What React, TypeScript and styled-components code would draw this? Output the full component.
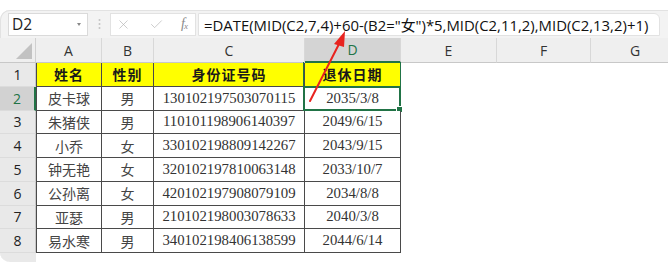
import React from 'react'
import styled, { createGlobalStyle, css } from 'styled-components'
import { X, Check } from 'lucide-react'

const GlobalStyle = createGlobalStyle`
	html, body {
		margin: 0;
		padding: 0;
		background: #ffffff;
	}
	body {
		font-family: 'Noto Sans', 'Noto Sans CJK SC', sans-serif;
	}
`

const Page = styled.div`
	position: relative;
	width: 668px;
	height: 266px;
	overflow: hidden;
	padding-top: 10px;
	box-sizing: border-box;
`

const Card = styled.div`
	background: #f3f3f3;
	border-radius: 10px 10px 0 10px;
	box-shadow: inset 0 1px 0 #e2e2e2, inset 1px 0 0 #e2e2e2;
	overflow: hidden;
	width: 680px;
`

const Toolbar = styled.div`
	display: flex;
	align-items: center;
	height: 28px;
	padding-left: 8px;
	box-sizing: border-box;
`

const NameBox = styled.div`
	display: flex;
	align-items: center;
	width: 80px;
	height: 23px;
	box-sizing: border-box;
	background: #ffffff;
	border: 1px solid #dadada;
	padding-left: 3px;
	font-family: 'Open Sans', sans-serif;
	font-size: 15.5px;
	color: #222;
`

const Caret = styled.span`
	margin-left: auto;
	margin-right: 6px;
	width: 0;
	height: 0;
	border-left: 2.5px solid transparent;
	border-right: 2.5px solid transparent;
	border-top: 3px solid #888;
`

const Grip = styled.div`
	width: 22px;
	display: flex;
	justify-content: center;
`

const IconBox = styled.div`
	display: flex;
	align-items: center;
	justify-content: space-between;
	width: 86px;
	height: 23px;
	box-sizing: border-box;
	background: #ffffff;
	border: 1px solid #e2e2e2;
	padding: 0 8px 0 5px;
	color: #b4b4b4;
`

const Fx = styled.span`
	font-family: 'Liberation Serif', serif;
	font-style: italic;
	font-size: 14px;
	color: #8a8a8a;
	letter-spacing: -1px;
	& sub {
		font-size: 9px;
		vertical-align: -1px;
	}
`

const Formula = styled.div`
	display: flex;
	align-items: center;
	height: 23px;
	width: 462px;
	box-sizing: border-box;
	margin-left: 2px;
	background: #ffffff;
	border: 1px solid #e2e2e2;
	border-radius: 0 6px 0 0;
	padding-left: 5px;
	font-family: 'Open Sans', 'Noto Sans CJK SC', sans-serif;
	font-size: 14.9px;
	color: #111;
	white-space: nowrap;
	overflow: hidden;
`

const Sheet = styled.div`
	display: grid;
	grid-template-columns: 36px 66px 52px 151px 96px 96px 94px 89px;
	grid-template-rows: 25px repeat(8, 23.75px) 9px;
	background: #ffffff;
`

const ColHead = styled.div<{ $active?: boolean }>`
	display: flex;
	align-items: center;
	justify-content: center;
	background: #efefef;
	border-right: 1px solid #d8d8d8;
	border-bottom: 1px solid #c8c8c8;
	font-family: 'Open Sans', sans-serif;
	font-size: 14px;
	color: #333;
	${({ $active }) =>
		$active &&
		css`
			background: #d4d4d4;
			color: #217346;
			border-bottom: 2px solid #217346;
		`}
`

const Corner = styled.div`
	position: relative;
	background: #efefef;
	border-right: 1px solid #d0d0d0;
	border-bottom: 1px solid #c8c8c8;
	&::after {
		content: '';
		position: absolute;
		right: 3px;
		bottom: 3px;
		border-left: 16px solid transparent;
		border-bottom: 16px solid #c2c2c2;
	}
`

const RowHead = styled.div<{ $active?: boolean }>`
	display: flex;
	align-items: center;
	justify-content: center;
	background: #e9e9e9;
	border-bottom: 1px solid #dcdcdc;
	border-right: 1px solid #c8c8c8;
	font-family: 'Open Sans', sans-serif;
	font-size: 14px;
	color: #222;
	${({ $active }) =>
		$active &&
		css`
			background: #d2d2d2;
			color: #217346;
			border-right: 2px solid #217346;
		`}
`

const Cell = styled.div<{ $title?: boolean; $num?: boolean; $first?: boolean }>`
	position: relative;
	display: flex;
	align-items: center;
	justify-content: center;
	background: #ffffff;
	border-right: 1px solid #4a4a4a;
	border-bottom: 1px solid #4a4a4a;
	${({ $first }) => $first && 'border-left: 1px solid #4a4a4a;'}
	font-family: 'Noto Sans CJK SC', sans-serif;
	font-size: 14px;
	color: #444;
	${({ $num }) =>
		$num &&
		css`
			font-family: 'Liberation Serif', 'Noto Sans CJK SC', serif;
			font-size: 14.8px;
			color: #333;
		`}
	${({ $title }) =>
		$title &&
		css`
			background: #ffff00;
			font-weight: 700;
			color: #1a1a1a;
			letter-spacing: 1px;
		`}
`

const Selection = styled.span`
	position: absolute;
	inset: -1px -1px -1px -2px;
	border: 2px solid #217346;
	pointer-events: none;
	&::after {
		content: '';
		position: absolute;
		right: -4px;
		bottom: -4px;
		width: 5px;
		height: 5px;
		background: #217346;
		border: 1px solid #fff;
	}
`

const ColumnFrame = styled.span`
	position: absolute;
	inset: -1px -1px 0 -2px;
	border-left: 1px solid #217346;
	border-right: 1px solid #217346;
	pointer-events: none;
`

const Blank = styled.div<{ $foot?: boolean }>`
	background: ${({ $foot }) => ($foot ? '#e9e9e9' : '#ffffff')};
`

const Arrow = styled.svg`
	position: absolute;
	left: 0;
	top: 0;
	pointer-events: none;
`

const people = [
	['皮卡球', '男', '130102197503070115', '2035/3/8'],
	['朱猪侠', '男', '110101198906140397', '2049/6/15'],
	['小乔', '女', '330102198809142267', '2043/9/15'],
	['钟无艳', '女', '320102197810063148', '2033/10/7'],
	['公孙离', '女', '420102197908079109', '2034/8/8'],
	['亚瑟', '男', '210102198003078633', '2040/3/8'],
	['易水寒', '男', '340102198406138599', '2044/6/14'],
]

const columns = ['A', 'B', 'C', 'D', 'E', 'F', 'G']

function App() {
	return (
		<>
			<GlobalStyle />
			<Page>
				<Card>
					<Toolbar>
						<NameBox>
							D2
							<Caret />
						</NameBox>
						<Grip>
							<svg width="3" height="12" viewBox="0 0 3 12">
								<circle cx="1.5" cy="2" r="1" fill="#c4c4c4" />
								<circle cx="1.5" cy="6" r="1" fill="#c4c4c4" />
								<circle cx="1.5" cy="10" r="1" fill="#c4c4c4" />
							</svg>
						</Grip>
						<IconBox>
							<X size={15} strokeWidth={1.1} />
							<Check size={15} strokeWidth={1.1} />
							<Fx>
								f<sub>x</sub>
							</Fx>
						</IconBox>
						<Formula>=DATE(MID(C2,7,4)+60-(B2="女")*5,MID(C2,11,2),MID(C2,13,2)+1)</Formula>
					</Toolbar>
					<Sheet>
						<Corner />
						{columns.map((c) => (
							<ColHead key={c} $active={c === 'D'}>
								{c}
							</ColHead>
						))}

						<RowHead>1</RowHead>
						<Cell $title $first>
							姓名
						</Cell>
						<Cell $title>性别</Cell>
						<Cell $title>身份证号码</Cell>
						<Cell $title>
							退休日期
							<ColumnFrame />
						</Cell>
						<Blank />
						<Blank />
						<Blank />

						{people.map((p, i) => (
							<React.Fragment key={p[2]}>
								<RowHead $active={i === 0}>{i + 2}</RowHead>
								<Cell $first>{p[0]}</Cell>
								<Cell>{p[1]}</Cell>
								<Cell $num>{p[2]}</Cell>
								<Cell $num>
									{p[3]}
									{i === 0 && <Selection />}
								</Cell>
								<Blank />
								<Blank />
								<Blank />
							</React.Fragment>
						))}

						<Blank $foot />
						{columns.map((c) => (
							<Blank key={c} />
						))}
					</Sheet>
				</Card>
				<Arrow width="668" height="266" viewBox="0 0 668 266">
					<line x1="310" y1="101" x2="339" y2="44" stroke="#e8231f" strokeWidth="2" strokeLinecap="round" />
					<polygon points="345,31 334,44 344,47" fill="#e8231f" />
				</Arrow>
			</Page>
		</>
	)
}

export default App
